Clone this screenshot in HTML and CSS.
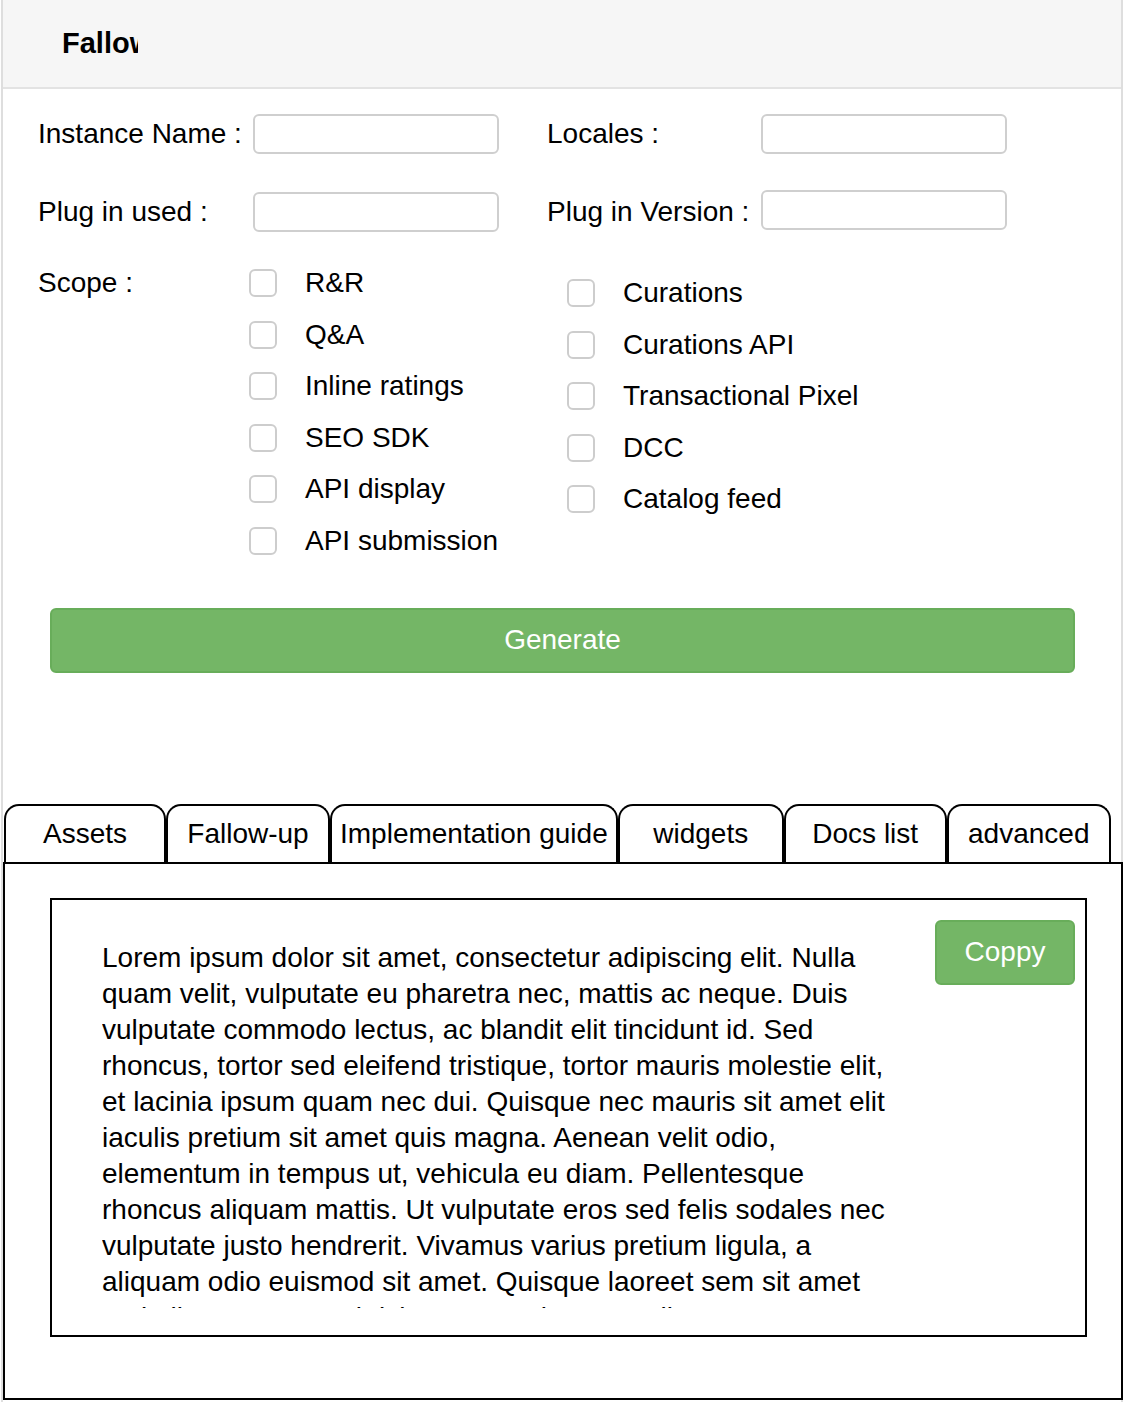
FILE: index.html
```html
<!DOCTYPE html>
<html>
<head>
<meta charset="utf-8">
<link rel="stylesheet" href="styles.css">
</head>
<body>
<div class="page">
  <header class="header"><div class="title">Fallow-up</div></header>
  <div class="form">
    <div class="row row-first">
      <div class="field"><label class="label">Instance Name :</label><input class="input" type="text"></div>
      <div class="field field-right"><label class="label label-right">Locales :</label><input class="input" type="text"></div>
    </div>
    <div class="row row-second">
      <div class="field"><label class="label">Plug in used :</label><input class="input" type="text"></div>
      <div class="field field-right"><label class="label label-right">Plug in Version :</label><input class="input" type="text"></div>
    </div>
    <div class="scope">
      <div class="scope-label">Scope :</div>
      <div class="checks checks-left">
        <label class="check"><span class="box-check"></span><span>R&amp;R</span></label>
        <label class="check"><span class="box-check"></span><span>Q&amp;A</span></label>
        <label class="check"><span class="box-check"></span><span>Inline ratings</span></label>
        <label class="check"><span class="box-check"></span><span>SEO SDK</span></label>
        <label class="check"><span class="box-check"></span><span>API display</span></label>
        <label class="check"><span class="box-check"></span><span>API submission</span></label>
      </div>
      <div class="checks checks-right">
        <label class="check"><span class="box-check"></span><span>Curations</span></label>
        <label class="check"><span class="box-check"></span><span>Curations API</span></label>
        <label class="check"><span class="box-check"></span><span>Transactional Pixel</span></label>
        <label class="check"><span class="box-check"></span><span>DCC</span></label>
        <label class="check"><span class="box-check"></span><span>Catalog feed</span></label>
      </div>
    </div>
    <button class="btn btn-generate">Generate</button>
  </div>
  <div class="tabs">
    <div class="tab tab-first">Assets</div>
    <div class="tab">Fallow-up</div>
    <div class="tab tab-long">Implementation guide</div>
    <div class="tab tab-wide">widgets</div>
    <div class="tab tab-narrow">Docs list</div>
    <div class="tab">advanced</div>
  </div>
  <div class="panel">
    <div class="content-box">
      <div class="text">Lorem ipsum dolor sit amet, consectetur adipiscing elit. Nulla quam velit, vulputate eu pharetra nec, mattis ac neque. Duis vulputate commodo lectus, ac blandit elit tincidunt id. Sed rhoncus, tortor sed eleifend tristique, tortor mauris molestie elit, et lacinia ipsum quam nec dui. Quisque nec mauris sit amet elit iaculis pretium sit amet quis magna. Aenean velit odio, elementum in tempus ut, vehicula eu diam. Pellentesque rhoncus aliquam mattis. Ut vulputate eros sed felis sodales nec vulputate justo hendrerit. Vivamus varius pretium ligula, a aliquam odio euismod sit amet. Quisque laoreet sem sit amet orci ullamcorper at ultricies metus viverra. Pellentesque arcu mauris, malesuada quis ornare accumsan, blandit sed diam.</div>
      <button class="btn btn-copy">Coppy</button>
    </div>
  </div>
</div>
</body>
</html>
```

FILE: styles.css
```css
html, body {
  margin: 0;
  padding: 0;
  background: #fff;
}
body {
  font-family: "Liberation Sans", Helvetica, Arial, sans-serif;
  font-size: 28px;
  color: #000;
  overflow: hidden;
}
.page {
  width: 1122px;
  margin-left: 1px;
  border-left: 2px solid #dedede;
  border-right: 2px solid #dedede;
  box-sizing: border-box;
  min-height: 1402px;
}
.header {
  height: 87px;
  background: #f6f6f6;
  border-bottom: 2px solid #e3e3e3;
  display: flex;
  align-items: center;
  padding-left: 59px;
}
.title {
  font-weight: bold;
  font-size: 29px;
  width: 76px;
  overflow: hidden;
  white-space: nowrap;
}
.form {
  padding: 25px 0 131px 35px;
}
.row {
  display: flex;
  height: 40px;
}
.row-second {
  margin-top: 38px;
}
.field {
  display: flex;
  align-items: center;
}
.field-right {
  margin-left: 48px;
}
.label {
  width: 215px;
  white-space: nowrap;
}
.label-right {
  width: 214px;
}
.input {
  width: 246px;
  height: 40px;
  box-sizing: border-box;
  border: 2px solid #cfcfcf;
  border-radius: 6px;
  background: #fff;
  margin: 0;
  padding: 0 8px;
}
.row-second .field-right .input {
  margin-top: -4px;
}
.scope {
  display: flex;
  margin-top: 37px;
}
.scope-label {
  width: 211px;
  height: 28px;
  line-height: 28px;
}
.checks {
  display: flex;
  flex-direction: column;
  gap: 23.6px;
}
.checks-left {
  width: 318px;
}
.checks-right {
  padding-top: 10px;
}
.check {
  display: flex;
  align-items: center;
  height: 28px;
  gap: 28px;
  white-space: nowrap;
}
.box-check {
  width: 28px;
  height: 28px;
  box-sizing: border-box;
  border: 2px solid #cdcdcd;
  border-radius: 6px;
  background: #fff;
  flex: none;
}
.btn {
  font-family: "Liberation Sans", Helvetica, Arial, sans-serif;
  font-size: 28px;
  color: #fff;
  background: #74b666;
  border: 2px solid #68ad5a;
  border-radius: 6px;
  box-sizing: border-box;
  padding: 0;
  cursor: pointer;
}
.btn-generate {
  display: block;
  margin: 53px 0 0 12px;
  width: 1025px;
  height: 65px;
}
.tabs {
  display: flex;
  margin-left: 1px;
  height: 58px;
}
.tab {
  min-width: 164px;
  box-sizing: border-box;
  height: 58px;
  border: 2px solid #000;
  border-bottom: none;
  border-radius: 15px 15px 0 0;
  text-align: center;
  line-height: 56px;
  padding: 0 10px;
  white-space: nowrap;
  background: #fff;
}
.tab-first {
  min-width: 162px;
}
.tab-long {
  padding: 0 8px;
}
.tab-wide {
  min-width: 166px;
}
.tab-narrow {
  min-width: 163px;
}
.panel {
  border: 2px solid #000;
  margin-right: -2px;
  height: 538px;
  box-sizing: border-box;
  padding: 34px 0 0 45px;
}
.content-box {
  width: 1037px;
  height: 439px;
  box-sizing: border-box;
  border: 2px solid #000;
  display: flex;
  align-items: flex-start;
  padding: 20px 10px 0 50px;
}
.text {
  margin-top: 20px;
  width: 795px;
  height: 368px;
  overflow: hidden;
  line-height: 36px;
}
.btn-copy {
  margin-left: auto;
  width: 140px;
  height: 65px;
  flex: none;
}
```
